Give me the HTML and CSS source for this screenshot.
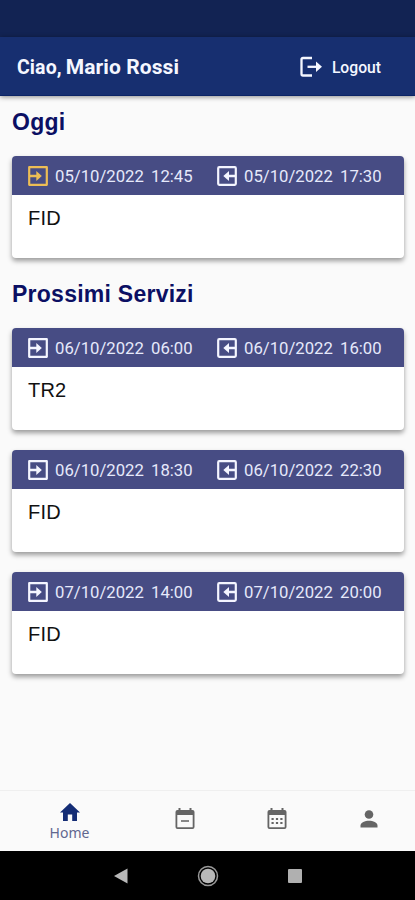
FILE: index.html
```html
<!DOCTYPE html>
<html lang="it">
<head>
<meta charset="utf-8">
<title>Servizi</title>
<link rel="stylesheet" href="styles.css">
</head>
<body>
<svg class="defs" width="0" height="0">
  <symbol id="in" viewBox="0 0 20 20"><path d="M1.2 7V1.2H18.8V18.8H1.2V13M1.2 7V13" fill="none" stroke="currentColor" stroke-width="2.200" stroke-linejoin="round"/><path d="M1 10H10" fill="none" stroke="currentColor" stroke-width="2.300"/><path d="M8.300 5L13.800 10L8.300 15Z" fill="currentColor"/></symbol>
  <symbol id="out" viewBox="0 0 20 20"><rect x="1.2" y="1.2" width="17.6" height="17.6" rx="1" fill="none" stroke="currentColor" stroke-width="2.2"/><path d="M18 10H10" fill="none" stroke="currentColor" stroke-width="2.4"/><path d="M12 5L6.300 10L12 15Z" fill="currentColor"/></symbol>
</svg>
<div class="status"></div>
<header class="bar">
  <h1 class="hello"><span class="ciao">Ciao,</span><span class="name">Mario Rossi</span></h1>
  <div class="logout">
    <svg width="23" height="22" viewBox="0 0 23 22" fill="none" stroke="currentColor" stroke-width="2.3"><path d="M12 2H3Q1.5 2 1.5 3.5V18Q1.5 19.500 3 19.500H12" stroke-linejoin="round"/><path d="M7.500 10.800H19"/><path d="M16 5.500L22 10.800L16 16.100Z" fill="currentColor" stroke="none"/></svg>
    <span>Logout</span>
  </div>
</header>
<main>
  <h2>Oggi</h2>
  <article class="card">
    <div class="when"><svg class="ic now"><use href="#in"/></svg><span class="date">05/10/2022</span><span class="time">12:45</span><svg class="ic end"><use href="#out"/></svg><span class="date">05/10/2022</span><span class="time">17:30</span></div>
    <p>FID</p>
  </article>
  <h2 class="next">Prossimi Servizi</h2>
  <article class="card">
    <div class="when"><svg class="ic"><use href="#in"/></svg><span class="date">06/10/2022</span><span class="time">06:00</span><svg class="ic end"><use href="#out"/></svg><span class="date">06/10/2022</span><span class="time">16:00</span></div>
    <p>TR2</p>
  </article>
  <article class="card">
    <div class="when"><svg class="ic"><use href="#in"/></svg><span class="date">06/10/2022</span><span class="time">18:30</span><svg class="ic end"><use href="#out"/></svg><span class="date">06/10/2022</span><span class="time">22:30</span></div>
    <p>FID</p>
  </article>
  <article class="card">
    <div class="when"><svg class="ic"><use href="#in"/></svg><span class="date">07/10/2022</span><span class="time">14:00</span><svg class="ic end"><use href="#out"/></svg><span class="date">07/10/2022</span><span class="time">20:00</span></div>
    <p>FID</p>
  </article>
</main>
<nav class="tabs">
  <div class="tab home"><svg width="20" height="18" viewBox="0 0 20 18"><path d="M10 0L20 9.500H17V18H12.200V11.500H7.800V18H3V9.500H0Z" fill="currentColor"/></svg><span>Home</span></div>
  <div class="tab"><svg width="20" height="22" viewBox="0 0 20 22"><path d="M3.500 0H5.500V2H14.500V0H16.500V2H17.500Q19.500 2 19.500 4V19Q19.500 21 17.500 21H2.500Q.5 21 .5 19V4Q.5 2 2.500 2H3.500ZM2.300 7V19.200H17.700V7Z" fill="currentColor" fill-rule="evenodd"/><path d="M6 13H14" stroke="#888" stroke-width="2"/></svg></div>
  <div class="tab"><svg width="20" height="22" viewBox="0 0 20 22"><path d="M3.500 0H5.500V2H14.500V0H16.500V2H17.500Q19.500 2 19.500 4V19Q19.500 21 17.500 21H2.500Q.5 21 .5 19V4Q.5 2 2.500 2H3.500ZM2.300 7V19.200H17.700V7Z" fill="currentColor" fill-rule="evenodd"/><path d="M4.500 11H15.500M4.500 15H15.500" stroke="currentColor" stroke-width="2" stroke-dasharray="2.200 2.200"/></svg></div>
  <div class="tab"><svg width="18" height="18" viewBox="0 0 18 18" fill="currentColor"><circle cx="9" cy="4.500" r="4.300"/><path d="M.5 17.500V15.500C.5 12.500 5 10.800 9 10.800S17.500 12.500 17.500 15.500V17.500Z"/></svg></div>
</nav>
<footer class="system">
  <svg width="14" height="16" viewBox="0 0 14 16"><path d="M0 8L13.500 .5V15.500Z" fill="#b8b8b8"/></svg>
  <svg width="22" height="22" viewBox="0 0 22 22"><circle cx="11" cy="11" r="9.500" fill="none" stroke="#999" stroke-width="1.500"/><circle cx="11" cy="11" r="7.300" fill="#b8b8b8"/></svg>
  <svg width="14" height="14"><rect width="14" height="14" rx="1" fill="#b0b0b0"/></svg>
</footer>
</body>
</html>
```
FILE: styles.css
```css
* { box-sizing: border-box; }
body {
  margin: 0;
  width: 415px;
  height: 900px;
  display: flex;
  flex-direction: column;
  background: #fafafa;
  font-family: Roboto, sans-serif;
  overflow: hidden;
}
.defs { display: none; }
.status { height: 37px; background: #122353; }
.bar {
  height: 59px;
  padding: 2px 34px 0 17px;
  display: flex;
  align-items: center;
  justify-content: space-between;
  background: #172f70;
  border-bottom: 1px solid #0b2466;
  box-shadow: 0 1px 5px rgba(0, 0, 0, .45);
  color: #f5f7ff;
}
.hello {
  margin: 0;
  display: flex;
  align-items: baseline;
  gap: 4px;
  font: bold 20px/26px Roboto, sans-serif;
}
.ciao { font-size: 19.5px; letter-spacing: .1px; }
.name { font-size: 21px; letter-spacing: .1px; }
.logout { display: flex; align-items: center; gap: 9px; font-weight: 500; font-size: 15.700px; }
main { flex: 1; padding: 0 11px 0 12px; }
h2 {
  margin: 12px 0 19px;
  font: bold 23px/29px "Liberation Sans", sans-serif;
  letter-spacing: .25px;
  color: #0b0f63;
}
h2.next { margin: 22px 0 19px; }
.card {
  height: 102px;
  margin-bottom: 20px;
  border-radius: 4px;
  background: #fff;
  overflow: hidden;
  box-shadow: 0 3px 5px rgba(0, 0, 0, .38);
}
.when {
  height: 39px;
  padding-left: 16px;
  display: flex;
  align-items: center;
  background: #474c84;
  color: #e6e9fb;
  font-size: 16.700px;
}
.when span { padding-top: 1px; }
.ic { width: 20px; height: 20px; margin-right: 7px; flex: none; color: #f4f5ff; }
.ic.now { color: #edbd55; }
.ic.end { margin-left: 24px; }
.date { width: 96px; }
.time { width: 42px; }
.card p {
  margin: 11px 0 0 16px;
  font: 20px/24px "Liberation Sans", sans-serif;
  letter-spacing: .2px;
  color: #111;
}
.tabs {
  height: 61px;
  border-top: 1px solid #efefef;
  display: flex;
  align-items: center;
  color: #656565;
  padding: 0 0 4px;
}
.tab { width: 92px; display: flex; justify-content: center; }
.tab.home { width: 139px; flex-direction: column; align-items: center; color: #142c75; padding-top: 7px; }
.home span { font: 14px/20px "Noto Sans", sans-serif; color: #61678f; margin-top: 2px; }
.system {
  height: 49px;
  background: #000;
  display: flex;
  align-items: center;
  justify-content: center;
  gap: 69px;
}
```
